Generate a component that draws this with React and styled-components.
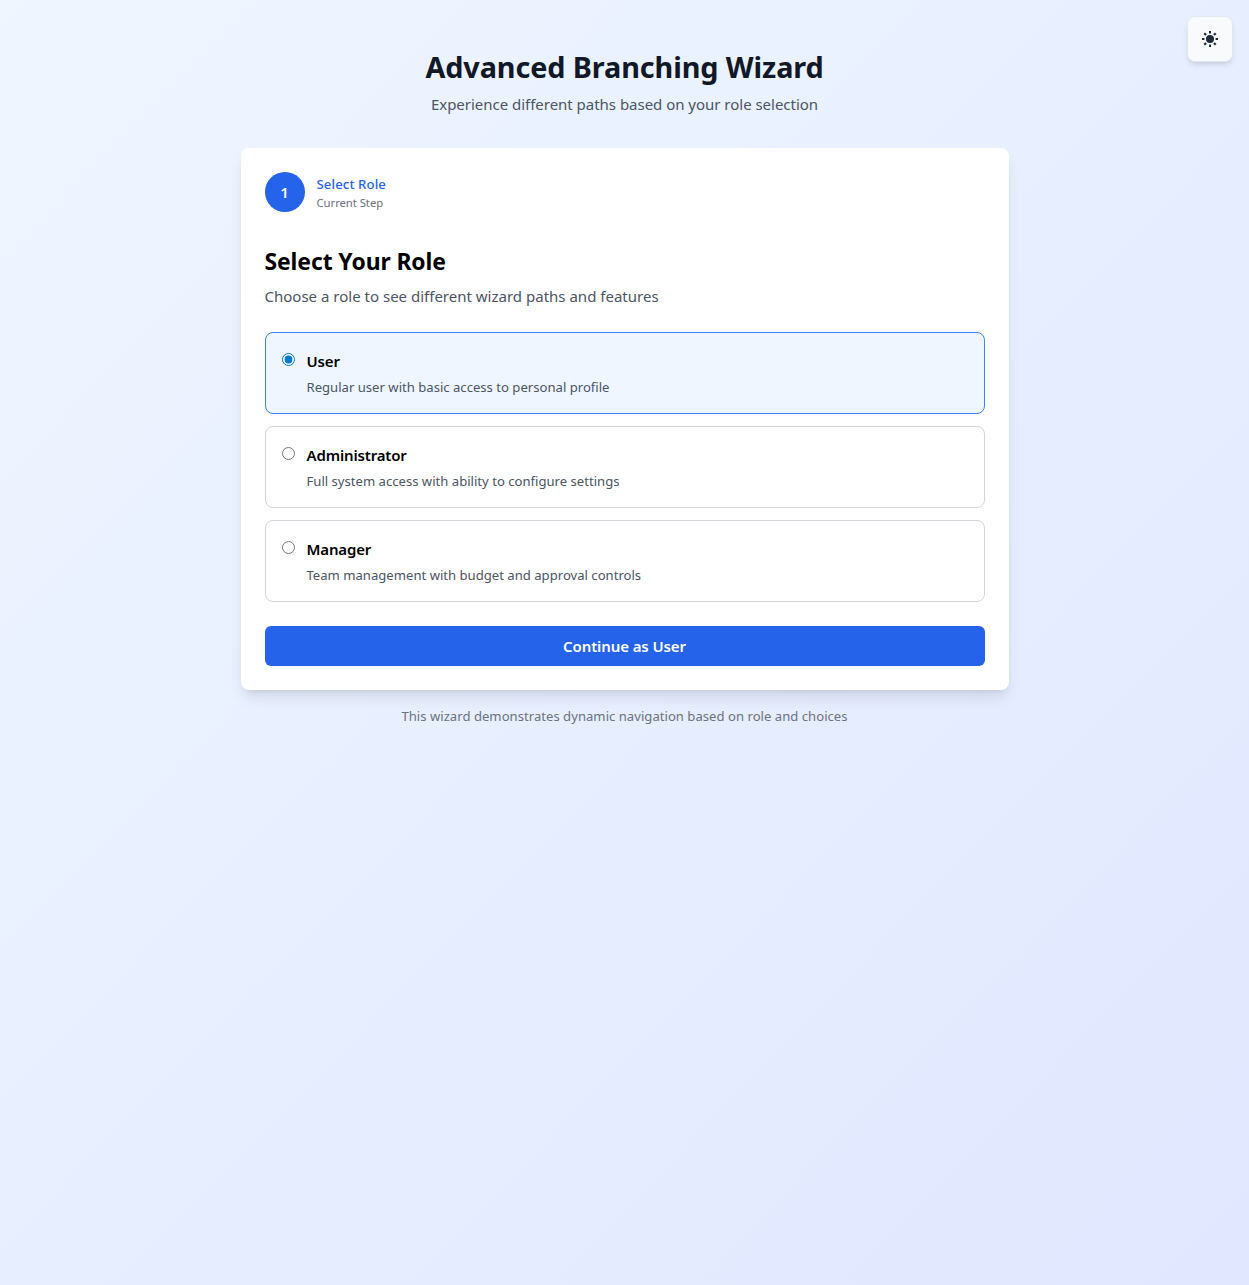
import React, { useState } from "react";
import styled, { createGlobalStyle, css } from "styled-components";

const GlobalStyle = createGlobalStyle`
  *, *::before, *::after { box-sizing: border-box; }
  body {
    margin: 0;
    font-family: "Segoe UI", "Noto Sans", "Open Sans", sans-serif;
    color: #000;
  }
  h1, h2, p { margin: 0; }
`;

const type = (size, line, weight, tracking) => css`
  font-size: ${size}px;
  line-height: ${line}px;
  font-weight: ${weight};
  letter-spacing: ${tracking}px;
`;

const Page = styled.div`
  min-height: 100vh;
  padding: 48px 16px;
  background: linear-gradient(to bottom right, #eff6ff, #e0e7ff);
`;

const ThemeToggle = styled.button`
  position: fixed;
  top: 16px;
  right: 16px;
  display: flex;
  align-items: center;
  justify-content: center;
  width: 46px;
  height: 46px;
  padding: 0;
  color: #1e293b;
  background: #f8fafc;
  border: 1px solid #e2e8f0;
  border-radius: 8px;
  box-shadow: 0 4px 6px -1px rgba(0, 0, 0, 0.1), 0 2px 4px -2px rgba(0, 0, 0, 0.1);
`;

const Container = styled.main`
  width: 768px;
  margin: 0 auto;
`;

const Header = styled.header`
  display: flex;
  flex-direction: column;
  gap: 8px;
  margin-bottom: 32px;
  text-align: center;
`;

const Title = styled.h1`
  ${type(28.8, 36, 700, -0.1)}
  padding-top: 1px;
  margin-bottom: -1px;
  color: #111827;
`;

const Subtitle = styled.p`
  ${type(15, 24, 400, -0.02)}
  color: #4b5563;
`;

const Card = styled.section`
  padding: 24px;
  background: #fff;
  border-radius: 8px;
  box-shadow: 0 10px 15px -3px rgba(0, 0, 0, 0.1), 0 4px 6px -4px rgba(0, 0, 0, 0.1);
`;

const Step = styled.div`
  display: flex;
  align-items: center;
  gap: 12px;
  margin-bottom: 32px;
`;

const StepNumber = styled.div`
  ${type(15, 24, 600, 0)}
  display: flex;
  align-items: center;
  justify-content: center;
  width: 40px;
  height: 40px;
  color: #fff;
  background: #2563eb;
  border-radius: 50%;
`;

const StepName = styled.div`
  ${type(13.2, 20, 500, 0.1)}
  color: #2563eb;
`;

const StepState = styled.div`
  ${type(11.3, 16, 400, -0.05)}
  padding-top: 1px;
  margin-bottom: -1px;
  color: #6b7280;
`;

const SectionTitle = styled.h2`
  ${type(22.9, 32, 700, -0.09)}
  padding-top: 2px;
  margin-bottom: 6px;
`;

const SectionText = styled.p`
  ${type(15, 24, 400, 0.005)}
  margin-bottom: 24px;
  color: #4b5563;
`;

const RoleList = styled.div`
  display: grid;
  gap: 12px;
  margin-bottom: 24px;
`;

const RoleOption = styled.label`
  display: flex;
  align-items: flex-start;
  gap: 12px;
  padding: 16px;
  background: ${(p) => (p.$selected ? "#eff6ff" : "#fff")};
  border: 1px solid ${(p) => (p.$selected ? "#3b82f6" : "#d1d5db")};
  border-radius: 8px;
  cursor: pointer;
`;

const Radio = styled.input`
  width: 13px;
  height: 13px;
  margin: 4px 0 0;
  accent-color: #0078d7;
`;

const RoleName = styled.div`
  ${type(15, 24, 600, -0.16)}
  margin-bottom: 4px;
`;

const RoleText = styled.div`
  ${type(13.1, 20, 400, 0.005)}
  color: #4b5563;
`;

const ContinueButton = styled.button`
  ${type(15, 24, 600, -0.1)}
  display: block;
  width: 100%;
  padding: 8px 16px;
  font-family: inherit;
  color: #fff;
  background: #2563eb;
  border: 0;
  border-radius: 6px;
`;

const Footnote = styled.p`
  ${type(13.1, 20, 400, 0.02)}
  margin-top: 16px;
  text-align: center;
  color: #6b7280;
`;

const straightRays = [0, 90, 180, 270];
const diagonalRays = [45, 135, 225, 315];

const SunIcon = () => (
  <svg width="16" height="16" viewBox="0 0 16 16" fill="currentColor" aria-hidden="true">
    <circle cx="8" cy="8" r="4" />
    {straightRays.map((angle) => (
      <rect key={angle} x="7" y="0" width="2" height="2.4" transform={`rotate(${angle} 8 8)`} />
    ))}
    {diagonalRays.map((angle) => (
      <rect key={angle} x="6.9" y="-0.1" width="2.2" height="2.5" transform={`rotate(${angle} 8 8)`} />
    ))}
  </svg>
);

const roles = [
  { name: "User", text: "Regular user with basic access to personal profile" },
  { name: "Administrator", text: "Full system access with ability to configure settings" },
  { name: "Manager", text: "Team management with budget and approval controls" },
];

export default function App() {
  const [selected, setSelected] = useState("User");
  return (
    <Page>
      <GlobalStyle />
      <ThemeToggle aria-label="Toggle theme">
        <SunIcon />
      </ThemeToggle>
      <Container>
        <Header>
          <Title>Advanced Branching Wizard</Title>
          <Subtitle>Experience different paths based on your role selection</Subtitle>
        </Header>
        <Card>
          <Step>
            <StepNumber>1</StepNumber>
            <div>
              <StepName>Select Role</StepName>
              <StepState>Current Step</StepState>
            </div>
          </Step>
          <SectionTitle>Select Your Role</SectionTitle>
          <SectionText>Choose a role to see different wizard paths and features</SectionText>
          <RoleList>
            {roles.map(({ name, text }) => (
              <RoleOption key={name} $selected={selected === name}>
                <Radio type="radio" name="role" checked={selected === name} onChange={() => setSelected(name)} />
                <div>
                  <RoleName>{name}</RoleName>
                  <RoleText>{text}</RoleText>
                </div>
              </RoleOption>
            ))}
          </RoleList>
          <ContinueButton>Continue as {selected}</ContinueButton>
        </Card>
        <Footnote>This wizard demonstrates dynamic navigation based on role and choices</Footnote>
      </Container>
    </Page>
  );
}
